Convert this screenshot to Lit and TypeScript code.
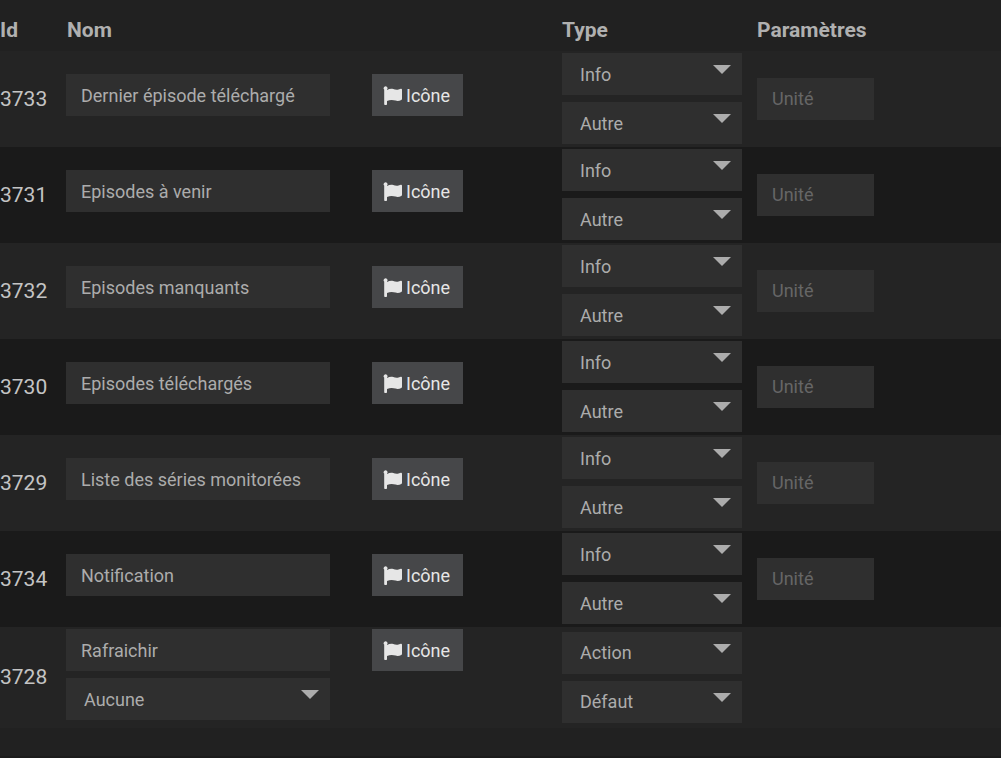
import { LitElement, html, css, svg } from "lit";
import { customElement, property } from "lit/decorators.js";

interface Command {
  id: number;
  name: string;
  type: string;
  subtype: string;
  linked?: string;
  unit: boolean;
}

const info = (id: number, name: string): Command => ({ id, name, type: "Info", subtype: "Autre", unit: true });

const COMMANDS: Command[] = [
  info(3733, "Dernier épisode téléchargé"),
  info(3731, "Episodes à venir"),
  info(3732, "Episodes manquants"),
  info(3730, "Episodes téléchargés"),
  info(3729, "Liste des séries monitorées"),
  info(3734, "Notification"),
  { id: 3728, name: "Rafraichir", type: "Action", subtype: "Défaut", linked: "Aucune", unit: false },
];

@customElement("select-box")
class SelectBox extends LitElement {
  @property() label = "";
  @property({ attribute: false }) options: string[] = [];

  static styles = css`
    :host { display: block; }
    .box { display: grid; }
    .field, .arrow { grid-area: 1 / 1; }
    .field {
      appearance: none;
      box-sizing: border-box;
      width: 100%;
      height: 42px;
      padding: 0 36px 0 18px;
      border: 0;
      border-radius: 0;
      background: #2f2f2f;
      color: #acacac;
      font: 18px Roboto, sans-serif;
    }
    .arrow {
      justify-self: end;
      width: 18px;
      height: 9px;
      margin: 12px 11px 0 0;
      fill: #acacac;
      pointer-events: none;
    }
  `;

  render() {
    return html`<div class="box">
      <select class="field" aria-label=${this.label}>
        ${this.options.map((o) => html`<option>${o}</option>`)}
      </select>
      <svg class="arrow" viewBox="0 0 18 9" aria-hidden="true"><path d="M0 0H18L9 9Z" /></svg>
    </div>`;
  }
}

const flag = svg`<path d="M1.2 3.6A1.9 1.9 0 1 1 4 3.5V4C6 3 8 2.4 10.2 3C12 3.5 13.5 4.2 15.5 3.5L17.8 2.7Q19 2.5 19 3.7V12.7Q19 13.5 18.3 13.9C16.5 14.9 14.6 15.2 12.5 14.6C10 13.9 7.2 13.6 4 15V18.2Q4 19 3.2 19H2Q1.2 19 1.2 18.2Z" />`;

@customElement("app-root")
class AppRoot extends LitElement {
  static styles = css`
    :host {
      display: block;
      min-height: 100vh;
      box-sizing: border-box;
      background: #212121;
      border-bottom: 2px solid #1c1c1c;
      color: #c4c4c4;
      font-family: Roboto, sans-serif;
    }
    .commands {
      width: 100%;
      table-layout: fixed;
      border-collapse: collapse;
    }
    .col-id { width: 66px; }
    .col-type { width: 195px; }
    .col-params { width: 244px; }
    .head {
      height: 51px;
      box-sizing: border-box;
      padding: 8px 0 0 0;
      color: #b0b0b0;
      font-size: 21px;
      line-height: 28px;
      font-weight: 700;
      text-align: left;
    }
    .head.name { padding-left: 1px; }
    .row { background: #242424; }
    .row:nth-child(even) { background: #1a1a1a; }
    .cell {
      padding: 2px 0 3px;
      vertical-align: middle;
      font-size: 21px;
      line-height: 28px;
    }
    .naming {
      display: grid;
      grid-template-columns: 1fr 190px;
      align-items: start;
      padding-bottom: 7px;
    }
    .naming.linked { padding-bottom: 5px; }
    .stack {
      display: flex;
      flex-direction: column;
      gap: 7px;
    }
    .naming .stack { padding-right: 42px; }
    .types { padding-right: 15px; }
    .text {
      display: block;
      box-sizing: border-box;
      width: 100%;
      height: 42px;
      padding: 0 15px;
      border: 0;
      border-radius: 0;
      background: #2f2f2f;
      color: #acacac;
      font: 18px Roboto, sans-serif;
    }
    .text.unit { width: 117px; }
    .text::placeholder { color: #666; opacity: 1; }
    .icon-button {
      display: flex;
      align-items: center;
      justify-self: start;
      gap: 3px;
      height: 42px;
      padding: 0 13px 0 11px;
      border: 0;
      background: #464749;
      color: #e6e6e6;
      font: 18px Roboto, sans-serif;
    }
    .flag {
      width: 20px;
      height: 20px;
      fill: currentColor;
    }
  `;

  private row(c: Command) {
    return html`<tr class="row">
      <td class="cell">${c.id}</td>
      <td class="cell">
        <div class="naming ${c.linked ? "linked" : ""}">
          <div class="stack">
            <input class="text" aria-label="Nom" .value=${c.name} />
            ${c.linked ? html`<select-box label="Nom" .options=${[c.linked]}></select-box>` : ""}
          </div>
          <button class="icon-button" type="button">
            <svg class="flag" viewBox="0 -1 20 20" aria-hidden="true">${flag}</svg>Icône
          </button>
        </div>
      </td>
      <td class="cell">
        <div class="stack types">
          <select-box label="Type" .options=${[c.type]}></select-box>
          <select-box label="Type" .options=${[c.subtype]}></select-box>
        </div>
      </td>
      <td class="cell">
        ${c.unit ? html`<input class="text unit" aria-label="Unité" placeholder="Unité" />` : ""}
      </td>
    </tr>`;
  }

  render() {
    return html`<table class="commands">
      <colgroup>
        <col class="col-id" />
        <col />
        <col class="col-type" />
        <col class="col-params" />
      </colgroup>
      <thead>
        <tr>
          <th class="head" scope="col">Id</th>
          <th class="head name" scope="col">Nom</th>
          <th class="head" scope="col">Type</th>
          <th class="head" scope="col">Paramètres</th>
        </tr>
      </thead>
      <tbody>${COMMANDS.map((c) => this.row(c))}</tbody>
    </table>`;
  }
}
